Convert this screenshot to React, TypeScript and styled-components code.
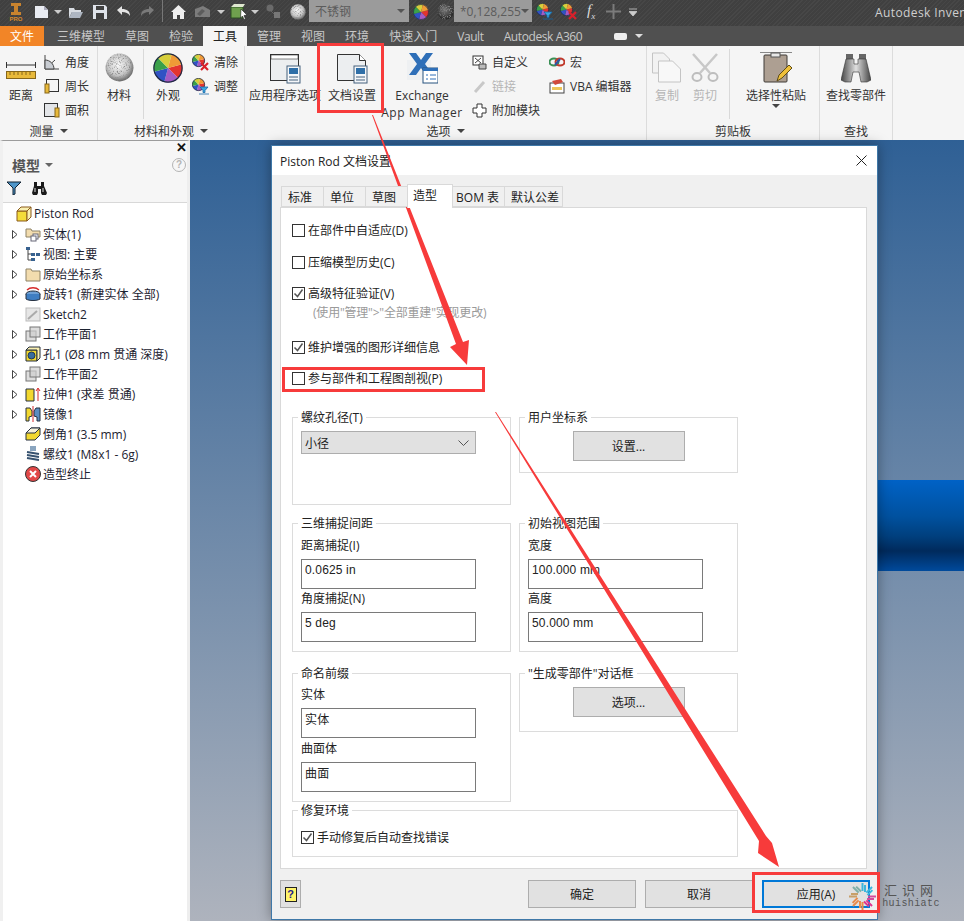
import React from 'react';
import styled, { createGlobalStyle } from 'styled-components';

const GlobalStyle = createGlobalStyle`
  html, body { margin: 0; padding: 0; background: #fff; }
  body { font-family: "Open Sans", "Noto Sans CJK SC", sans-serif; font-size: 12px; color: #111; }
`;

/* ---------- shared little drawings ---------- */

const sector = (a: number, b: number) => {
  const p = (d: number) => [50 + 48 * Math.cos((d * Math.PI) / 180), 50 + 48 * Math.sin((d * Math.PI) / 180)].map((n) => n.toFixed(1)).join(' ');
  return `M50 50L${p(a)}A48 48 0 0 1 ${p(b)}Z`;
};

const WHEEL = ['#e3342f', '#a35bc4', '#3152c4', '#3aa04a', '#d7cf3c', '#ef9a36'];

const Wheel: React.FC<{ size: number }> = ({ size }) => (
  <svg width={size} height={size} viewBox="0 0 100 100">
    {WHEEL.map((c, i) => (
      <path key={c} d={sector(i * 60 - 15, i * 60 + 45)} fill={c} />
    ))}
    <circle cx="50" cy="50" r="47" fill="none" stroke="#1f2a44" strokeWidth="4" />
  </svg>
);

const SmallWheel: React.FC<{ mark: 'x' | 'funnel' }> = ({ mark }) => (
  <svg width="17" height="17" viewBox="0 0 17 17">
    <g transform="scale(.13)">
      {WHEEL.map((c, i) => (
        <path key={c} d={sector(i * 60 - 15, i * 60 + 45)} fill={c} />
      ))}
      <circle cx="50" cy="50" r="47" fill="none" stroke="#1f2a44" strokeWidth="6" />
    </g>
    {mark === 'x' ? (
      <path d="M9 9l7 7M16 9l-7 7" stroke="#d9202a" strokeWidth="2.2" />
    ) : (
      <path d="M8 9h8l-3 3.500v2h-2v-2zM7 16h10" fill="#3aa7e0" stroke="#1668a8" strokeWidth=".8" />
    )}
  </svg>
);

const Ball: React.FC<{ id: string; size: number; dark?: boolean }> = ({ id, size, dark }) => (
  <svg width={size} height={size} viewBox="0 0 100 100">
    <defs>
      <radialGradient id={`${id}g`} cx=".45" cy=".4" r=".65">
        <stop offset="0" stopColor={dark ? '#777' : '#fafafa'} />
        <stop offset=".6" stopColor={dark ? '#444' : '#c4c4c4'} />
        <stop offset="1" stopColor={dark ? '#1c1c1c' : '#505050'} />
      </radialGradient>
      <filter id={`${id}f`}>
        <feTurbulence type="fractalNoise" baseFrequency=".22" numOctaves="2" seed="4" />
        <feColorMatrix values="0 0 0 0 .25 0 0 0 0 .25 0 0 0 0 .25 3.5 0 0 0 -1.75" />
        <feComposite in2="SourceGraphic" operator="in" />
        <feMerge>
          <feMergeNode in="SourceGraphic" />
          <feMergeNode />
        </feMerge>
      </filter>
    </defs>
    <circle cx="50" cy="50" r="48" fill={`url(#${id}g)`} filter={`url(#${id}f)`} />
  </svg>
);

const Caret = styled.span<{ $c?: string }>`
  display: inline-block;
  width: 0;
  height: 0;
  border-left: 4px solid transparent;
  border-right: 4px solid transparent;
  border-top: 4px solid ${(p) => p.$c || '#444'};
`;

const Svg: React.FC<{ w: number; h?: number; children: React.ReactNode }> = ({ w, h, children }) => (
  <svg width={w} height={h || w} viewBox={`0 0 ${w} ${h || w}`}>
    {children}
  </svg>
);

/* ---------- title bar ---------- */

const TitleBar = styled.div`
  height: 26px;
  display: flex;
  align-items: flex-start;
  position: relative;
  background: repeating-linear-gradient(135deg, #474747 0 1px, #404040 1px 3px);
  overflow: hidden;
`;

const Slot = styled.div<{ $gap: number }>`
  margin-left: ${(p) => p.$gap}px;
  height: 23px;
  display: flex;
  align-items: center;
  flex: none;
`;

const QuickSep = styled.div<{ $gap: number }>`
  margin-left: ${(p) => p.$gap}px;
  width: 1px;
  height: 22px;
  background: #777;
  flex: none;
`;

const Combo = styled.div<{ $gap: number; $w: number }>`
  margin-left: ${(p) => p.$gap}px;
  width: ${(p) => p.$w}px;
  height: 22px;
  box-sizing: border-box;
  padding: 0 4px 0 6px;
  background: #9b9b9b;
  color: #5c5c5c;
  display: flex;
  align-items: center;
  justify-content: space-between;
  flex: none;
  font-size: 12px;
  white-space: nowrap;
  overflow: hidden;
`;

const Fx = styled.span`
  font-family: "Liberation Serif", serif;
  font-style: italic;
  font-size: 15px;
  color: #ddd;
  sub { font-size: 9px; }
`;

const AppTitle = styled.div`
  position: absolute;
  left: 875px;
  top: 4px;
  color: #cfcfcf;
  font-size: 12px;
  letter-spacing: .4px;
  white-space: nowrap;
`;

const Logo = styled.div`
  width: 20px;
  display: flex;
  flex-direction: column;
  align-items: center;
  color: #d98a2c;
  font: bold 6px "Liberation Sans", sans-serif;
  line-height: 6px;
`;

const TitleIcons = () => (
  <>
    <Slot $gap={6}>
      <Logo>
        <Svg w={12} h={14}>
          <path d="M1 1h10v3H8v6h3v3H1v-3h3V4H1z" fill="#c9832e" />
        </Svg>
        PRO
      </Logo>
    </Slot>
    <Slot $gap={8}>
      <Svg w={15} h={16}>
        <path d="M1 2h9l4 4v8H1z" fill="#e9ecf2" />
        <path d="M10 2v4h4" fill="#aab" />
      </Svg>
    </Slot>
    <Slot $gap={5}><Caret $c="#ccc" /></Slot>
    <Slot $gap={6}>
      <Svg w={16}>
        <path d="M1 4h5l1 2h6v2H4l-3 6z" fill="#d8dce2" />
        <path d="M4 8h11l-3 6H1z" fill="#aeb6c2" />
      </Svg>
    </Slot>
    <Slot $gap={8}>
      <Svg w={16}>
        <path d="M1 1h12l2 2v12H1z" fill="#dfe3ea" />
        <path d="M4 2h8v4H4z" fill="#404040" />
        <path d="M4 9h8v6H4z" fill="#3f3f3f" />
      </Svg>
    </Slot>
    <Slot $gap={8}>
      <Svg w={15}>
        <path d="M1 6l5-4v3c5 0 8 2 8 7-2-3-4-4-8-4v3z" fill="#e4e4e4" />
      </Svg>
    </Slot>
    <Slot $gap={9}>
      <Svg w={15}>
        <path d="M14 6L9 2v3c-5 0-8 2-8 7 2-3 4-4 8-4v3z" fill="#7a7a7a" />
      </Svg>
    </Slot>
    <QuickSep $gap={7} />
    <Slot $gap={8}>
      <Svg w={15}>
        <path d="M7.500 1L15 8h-2v7H9v-4H6v4H2V8H0z" fill="#eee" />
      </Svg>
    </Slot>
    <Slot $gap={8}>
      <Svg w={17} h={16}>
        <path d="M1 5l8-3 7 4v7H1z" fill="#7c7c7c" />
        <path d="M3 10l5-5 3 2-5 5z" fill="#5c5c5c" />
      </Svg>
    </Slot>
    <Slot $gap={6}><Caret $c="#ccc" /></Slot>
    <Slot $gap={5}>
      <Svg w={19} h={18}>
        <path d="M1 4h12v11H1z" fill="#6fa04e" stroke="#2d4f22" />
        <path d="M1 4l3-3h11l-2 3z" fill="#dfe8d0" />
        <path d="M11 6l6 6-3 .5 1.500 3.500-1.500.5-1.500-3.500-2 2z" fill="#fff" stroke="#222" strokeWidth=".6" />
      </Svg>
    </Slot>
    <Slot $gap={2}><Caret $c="#ccc" /></Slot>
    <Slot $gap={7}>
      <Svg w={15} h={16}>
        <circle cx="4" cy="4" r="3.500" fill="#6a6a6a" />
        <path d="M8 8h6v6H8z" fill="#777" />
        <path d="M5 7l3 3" stroke="#666" />
      </Svg>
    </Slot>
    <Slot $gap={9}><Ball id="q1" size={16} /></Slot>
    <Combo $gap={3} $w={100}>
      不锈钢<Caret $c="#555" />
    </Combo>
    <Slot $gap={4}><Wheel size={16} /></Slot>
    <Slot $gap={8}><Ball id="q2" size={17} dark /></Slot>
    <Combo $gap={0} $w={78}>
      *0,128,255<Caret $c="#555" />
    </Combo>
    <Slot $gap={4}><SmallWheel mark="funnel" /></Slot>
    <Slot $gap={7}><SmallWheel mark="x" /></Slot>
    <Slot $gap={10}><Fx>f<sub>x</sub></Fx></Slot>
    <Slot $gap={11}>
      <Svg w={15}>
        <path d="M7.500 0v15M0 7.500h15" stroke="#7b7b7b" strokeWidth="2" />
      </Svg>
    </Slot>
    <Slot $gap={8}>
      <Svg w={8}>
        <path d="M0 1h8M0 3.500h8L4 8z" stroke="#ccc" fill="#ccc" strokeWidth=".8" />
      </Svg>
    </Slot>
    <AppTitle>Autodesk Inventor Professional</AppTitle>
  </>
);

/* ---------- ribbon ---------- */

const TabRow = styled.div`
  height: 20px;
  display: flex;
  align-items: stretch;
  background: #505050;
`;

const RibbonTab = styled.div<{ $active?: boolean; $file?: boolean; $latin?: boolean }>`
  flex: none;
  display: flex;
  align-items: center;
  padding: 0 10px;
  margin-right: ${(p) => (p.$file ? 3 : 0)}px;
  letter-spacing: ${(p) => (p.$latin ? -0.4 : 0)}px;
  color: ${(p) => (p.$active ? '#222' : p.$file ? '#fff' : '#c8c8c8')};
  background: ${(p) => (p.$active ? '#f5f5f5' : p.$file ? '#f28527' : 'transparent')};
`;

const TabGadget = styled.div`
  margin-left: 22px;
  display: flex;
  align-items: center;
  gap: 8px;
`;

const GadgetPill = styled.div`
  width: 13px;
  height: 7px;
  border-radius: 2px;
  background: #eee;
`;

const Ribbon = styled.div`
  height: 94px;
  display: flex;
  background: #f5f5f5;
`;

const RibbonPanel = styled.div<{ $w: number }>`
  width: ${(p) => p.$w}px;
  flex: none;
  box-sizing: border-box;
  display: flex;
  flex-direction: column;
  border-right: 1px solid #dcdcdc;
`;

const PanelBody = styled.div`
  height: 76px;
  display: flex;
  align-items: flex-start;
`;

const PanelFoot = styled.div`
  height: 18px;
  display: flex;
  align-items: center;
  justify-content: center;
  gap: 6px;
  color: #333;
`;

const LargeTool = styled.div<{ $w: number; $off?: boolean }>`
  width: ${(p) => p.$w}px;
  flex: none;
  padding-top: 5px;
  display: flex;
  flex-direction: column;
  align-items: center;
  text-align: center;
  line-height: 17px;
  white-space: nowrap;
  color: ${(p) => (p.$off ? '#b5b5b5' : '#333')};
`;

const LargeIcon = styled.div`
  height: 33px;
  margin-bottom: 3px;
  display: flex;
  align-items: center;
  justify-content: center;
`;

const WideLine = styled.span`
  letter-spacing: .6px;
`;

const SmallCol = styled.div<{ $w?: number; $gap?: number }>`
  ${(p) => (p.$w ? `width: ${p.$w}px;` : '')}
  margin-left: ${(p) => p.$gap || 0}px;
  padding-top: 4px;
  flex: none;
`;

const SmallTool = styled.div<{ $off?: boolean }>`
  height: 24px;
  display: flex;
  align-items: center;
  gap: 5px;
  white-space: nowrap;
  color: ${(p) => (p.$off ? '#b5b5b5' : '#333')};
`;

const SmallIcon = styled.div`
  width: 16px;
  display: flex;
  justify-content: center;
  flex: none;
`;

const VDivider = styled.div<{ $gap: number }>`
  width: 1px;
  height: 70px;
  margin: 3px 0 0 ${(p) => p.$gap}px;
  background: #d9d9d9;
  flex: none;
`;

const DocPanelIcon: React.FC<{ sheet?: boolean }> = ({ sheet }) => (
  <Svg w={32} h={32}>
    {sheet ? (
      <>
        <path d="M1.500 2.500h22l6 6v20h-28z" fill="#eceef0" stroke="#333" />
        <path d="M23.500 2.500v6h6" fill="#fff" stroke="#333" />
      </>
    ) : (
      <>
        <rect x="1.500" y="2.500" width="28" height="26" fill="#eceef0" stroke="#333" />
        <path d="M2 3h27v4H2z" fill="#fff" stroke="#333" strokeWidth=".6" />
      </>
    )}
    <rect x="18" y="14" width="13" height="17" fill="#f4f6f9" stroke="#44607d" />
    <rect x="20" y="16" width="9" height="6" fill="#2f6fa8" />
    <path d="M20 25h9M20 28h9" stroke="#44607d" />
  </Svg>
);

const RibbonBar = () => (
  <>
    <TabRow>
      <RibbonTab $file>文件</RibbonTab>
      {['三维模型', '草图', '检验'].map((t) => (
        <RibbonTab key={t}>{t}</RibbonTab>
      ))}
      <RibbonTab $active>工具</RibbonTab>
      {['管理', '视图', '环境', '快速入门'].map((t) => (
        <RibbonTab key={t}>{t}</RibbonTab>
      ))}
      <RibbonTab $latin>Vault</RibbonTab>
      <RibbonTab $latin>Autodesk A360</RibbonTab>
      <TabGadget>
        <GadgetPill />
        <Caret $c="#ddd" />
      </TabGadget>
    </TabRow>
    <Ribbon>
      <RibbonPanel $w={98}>
        <PanelBody>
          <LargeTool $w={42}>
            <LargeIcon>
              <Svg w={30} h={24}>
                <path d="M.500 6v6M29.500 6v6M0 9h30" stroke="#333" />
                <rect x=".5" y="15.500" width="29" height="7" fill="#e8b93a" stroke="#86661a" />
                <path d="M4 16v3M8 16v3M12 16v3M16 16v3M20 16v3M24 16v3" stroke="#86661a" />
              </Svg>
            </LargeIcon>
            距离
          </LargeTool>
          <SmallCol $gap={2}>
            <SmallTool>
              <SmallIcon>
                <Svg w={16}>
                  <path d="M1 1v14h14M1 15L11 6" fill="none" stroke="#444" />
                  <path d="M1 6c5 0 9 4 9 9H1z" fill="#c8ccd2" stroke="#444" />
                </Svg>
              </SmallIcon>
              角度
            </SmallTool>
            <SmallTool>
              <SmallIcon>
                <Svg w={16}>
                  <rect x="2.500" y="1.500" width="12" height="12" fill="none" stroke="#333" />
                  <rect x="1" y="6" width="4" height="9" fill="#e8b93a" stroke="#86661a" />
                </Svg>
              </SmallIcon>
              周长
            </SmallTool>
            <SmallTool>
              <SmallIcon>
                <Svg w={16}>
                  <rect x=".5" y="1.500" width="13" height="13" fill="#e3e5e8" stroke="#333" />
                  <rect x="11" y="6" width="4" height="9" fill="#e8b93a" stroke="#86661a" />
                </Svg>
              </SmallIcon>
              面积
            </SmallTool>
          </SmallCol>
        </PanelBody>
        <PanelFoot>测量 <Caret /></PanelFoot>
      </RibbonPanel>

      <RibbonPanel $w={147}>
        <PanelBody>
          <LargeTool $w={42}>
            <LargeIcon><Ball id="r1" size={29} /></LargeIcon>
            材料
          </LargeTool>
          <VDivider $gap={3} />
          <LargeTool $w={48}>
            <LargeIcon><Wheel size={30} /></LargeIcon>
            外观
          </LargeTool>
          <SmallCol>
            <SmallTool><SmallWheel mark="x" />清除</SmallTool>
            <SmallTool><SmallWheel mark="funnel" />调整</SmallTool>
          </SmallCol>
        </PanelBody>
        <PanelFoot>材料和外观 <Caret /></PanelFoot>
      </RibbonPanel>

      <RibbonPanel $w={402}>
        <PanelBody>
          <LargeTool $w={80}>
            <LargeIcon><DocPanelIcon /></LargeIcon>
            应用程序选项
          </LargeTool>
          <LargeTool $w={54}>
            <LargeIcon><DocPanelIcon sheet /></LargeIcon>
            文档设置
          </LargeTool>
          <LargeTool $w={86}>
            <LargeIcon>
              <Svg w={32} h={32}>
                <rect x="1" y="8" width="24" height="20" fill="#eef0f2" />
                <path d="M3 1h7l5 7 5-7h7l-8 11 8 11h-7l-5-7-5 7H3l8-11z" fill="#2e6fb8" />
                <rect x="17" y="16" width="15" height="15" fill="#fff" stroke="#27537f" />
                <path d="M17 16h15v3H17z" fill="#2e6fb8" />
                <path d="M20 23h2M24 23h6M20 27h2M24 27h6" stroke="#2e6fb8" />
              </Svg>
            </LargeIcon>
            Exchange<br /><WideLine>App Manager</WideLine>
          </LargeTool>
          <SmallCol $w={78} $gap={6}>
            <SmallTool>
              <SmallIcon>
                <Svg w={15}>
                  <rect x="1" y="1" width="10" height="9" fill="#fff" stroke="#333" />
                  <path d="M3 3l6 5M9 3L3 8M7 9h7v5H7z" fill="#bbb" stroke="#444" />
                </Svg>
              </SmallIcon>
              自定义
            </SmallTool>
            <SmallTool $off>
              <SmallIcon>
                <Svg w={15}>
                  <path d="M3 13l9-10" stroke="#c8c8c8" strokeWidth="3" />
                </Svg>
              </SmallIcon>
              链接
            </SmallTool>
            <SmallTool>
              <SmallIcon>
                <Svg w={15}>
                  <path d="M5 1h5v4h4v5h-4v4H5v-4H1V5h4z" fill="#fff" stroke="#333" />
                </Svg>
              </SmallIcon>
              附加模块
            </SmallTool>
          </SmallCol>
          <SmallCol>
            <SmallTool>
              <SmallIcon>
                <Svg w={16} h={12}>
                  <ellipse cx="5" cy="6" rx="4.500" ry="3.500" fill="none" stroke="#3a8f55" strokeWidth="2" />
                  <ellipse cx="11" cy="6" rx="4.500" ry="3.500" fill="none" stroke="#c0392b" strokeWidth="2" />
                  <path d="M6 9l5-6" stroke="#2d55a8" strokeWidth="2" />
                </Svg>
              </SmallIcon>
              宏
            </SmallTool>
            <SmallTool>
              <SmallIcon>
                <Svg w={16}>
                  <rect x="1" y="5" width="14" height="10" fill="#fff" stroke="#444" />
                  <path d="M3 3l9-2 2 3-8 3z" fill="#d14a3c" />
                  <path d="M3 9h10v3H3z" fill="#ecc65a" />
                </Svg>
              </SmallIcon>
              VBA 编辑器
            </SmallTool>
          </SmallCol>
        </PanelBody>
        <PanelFoot>选项 <Caret /></PanelFoot>
      </RibbonPanel>

      <RibbonPanel $w={173}>
        <PanelBody>
          <LargeTool $w={40} $off>
            <LargeIcon>
              <Svg w={30} h={31}>
                <path d="M.500 1h11l6 6v14H.500z" fill="#f2f2f2" stroke="#c4c4c4" />
                <path d="M6.500 9h14l8 8v13h-22z" fill="#f8f8f8" stroke="#c4c4c4" />
              </Svg>
            </LargeIcon>
            复制
          </LargeTool>
          <LargeTool $w={36} $off>
            <LargeIcon>
              <Svg w={28} h={30}>
                <path d="M2 1l17 19M26 1L9 20" stroke="#c8c8c8" strokeWidth="2.500" />
                <ellipse cx="6" cy="24" rx="4.500" ry="4" fill="none" stroke="#bdbdbd" strokeWidth="2" />
                <ellipse cx="22" cy="24" rx="4.500" ry="4" fill="none" stroke="#bdbdbd" strokeWidth="2" />
              </Svg>
            </LargeIcon>
            剪切
          </LargeTool>
          <VDivider $gap={6} />
          <LargeTool $w={92}>
            <LargeIcon>
              <Svg w={32} h={32}>
                <path d="M0 .500h32" stroke="#888" />
                <rect x="4" y="3" width="23" height="27" rx="1" fill="#ad9f92" stroke="#3e3a36" />
                <rect x="11" y="1" width="9" height="4" fill="#e8e8e8" stroke="#555" />
                <path d="M17 29l2-6 10-10 3 3-10 10z" fill="#efc03a" stroke="#5f4d18" />
              </Svg>
            </LargeIcon>
            选择性粘贴
            <Caret />
          </LargeTool>
        </PanelBody>
        <PanelFoot>剪贴板</PanelFoot>
      </RibbonPanel>

      <RibbonPanel $w={73}>
        <PanelBody>
          <LargeTool $w={72}>
            <LargeIcon>
              <Svg w={30} h={30}>
                <defs>
                  <linearGradient id="bino" x1="0" x2="1">
                    <stop offset="0" stopColor="#444" />
                    <stop offset=".5" stopColor="#e0e0e0" />
                    <stop offset="1" stopColor="#444" />
                  </linearGradient>
                </defs>
                <path d="M5 1h7v5H5zM18 1h7v5h-7z" fill="#666" />
                <path d="M5 6h8v5h4V6h8l5 21-4 2H20l-2-10h-6l-2 10H4l-4-2z" fill="url(#bino)" stroke="#333" strokeWidth=".6" />
              </Svg>
            </LargeIcon>
            查找零部件
          </LargeTool>
        </PanelBody>
        <PanelFoot>查找</PanelFoot>
      </RibbonPanel>
    </Ribbon>
  </>
);

/* ---------- browser panel ---------- */

const Workspace = styled.div`
  height: 781px;
  display: flex;
`;

const Browser = styled.aside`
  width: 190px;
  flex: none;
  box-sizing: border-box;
  background: #fff;
  border-left: 3px solid #f0f0f0;
  border-right: 3px solid #eeeeee;
  border-top: 1px solid #9c9c9c;
`;

const BrowserHead = styled.div`
  height: 62px;
  box-sizing: border-box;
  background: #f6f6f6;
  border-bottom: 1px solid #d8d8d8;
  position: relative;
`;

const BrowserTitle = styled.div`
  position: absolute;
  left: 9px;
  top: 14px;
  display: flex;
  align-items: center;
  gap: 5px;
  font-size: 14px;
  font-weight: 700;
  color: #555;
`;

const BrowserClose = styled.div`
  position: absolute;
  right: 0;
  top: -1px;
  font: 700 13px "Liberation Sans", sans-serif;
  color: #111;
`;

const HelpRound = styled.div`
  position: absolute;
  right: 1px;
  top: 17px;
  width: 12px;
  height: 12px;
  border: 1px solid #b4b4b4;
  border-radius: 50%;
  color: #b4b4b4;
  font: 700 10px/12px "Liberation Sans", sans-serif;
  text-align: center;
`;

const BrowserTools = styled.div`
  position: absolute;
  left: 4px;
  top: 40px;
  display: flex;
  gap: 10px;
`;

const TreeRow = styled.div<{ $root?: boolean }>`
  height: ${(p) => (p.$root ? 21 : 20)}px;
  box-sizing: border-box;
  display: flex;
  align-items: center;
  gap: 2px;
  padding-left: ${(p) => (p.$root ? 12 : 9)}px;
  color: #1c2230;
  white-space: nowrap;
`;

const Expander = styled.span`
  width: 10px;
  display: flex;
  flex: none;
`;

const TreeIcon = styled.span`
  width: 17px;
  display: flex;
  justify-content: center;
  flex: none;
`;

const BoxIcon = () => (
  <Svg w={16}>
    <path d="M1 5h10v10H1z" fill="#f4dc3a" stroke="#8a5a1c" />
    <path d="M1 5l4-4h10l-4 4zM11 5l4-4v10l-4 4z" fill="#f9efb0" stroke="#8a5a1c" />
  </Svg>
);

const FolderIcon = () => (
  <Svg w={16}>
    <path d="M1 3h5l1 2h8v10H1z" fill="#f2dcae" stroke="#8d8266" />
  </Svg>
);

const PlaneIcon = () => (
  <Svg w={16}>
    <rect x="1" y="5" width="10" height="10" fill="#ddd" stroke="#777" />
    <rect x="5" y="1" width="10" height="10" fill="#cfcfcf" fillOpacity=".7" stroke="#777" />
  </Svg>
);

const TREE: { icon: React.ReactNode; text: string; exp?: boolean }[] = [
  {
    icon: (
      <Svg w={16}>
        <path d="M1 3h5l1 2h8v6H1z" fill="#f2dcae" stroke="#8d8266" />
        <rect x="8" y="8" width="5" height="5" fill="#fff" stroke="#667" />
        <rect x="6" y="10" width="5" height="5" fill="#fff" stroke="#667" />
      </Svg>
    ),
    text: '实体(1)',
    exp: true,
  },
  {
    icon: (
      <Svg w={16}>
        <rect x="1" y="1" width="4" height="3" fill="#37618f" />
        <rect x="6" y="7" width="4" height="3" fill="#37618f" />
        <rect x="11" y="7" width="4" height="3" fill="#37618f" />
        <rect x="6" y="12" width="4" height="3" fill="#37618f" />
        <path d="M3 4v10h3M3 8h3" fill="none" stroke="#444" />
      </Svg>
    ),
    text: '视图: 主要',
    exp: true,
  },
  { icon: <FolderIcon />, text: '原始坐标系', exp: true },
  {
    icon: (
      <Svg w={16}>
        <path d="M2 4c3-3 9-3 12 0" fill="none" stroke="#d52a2a" strokeWidth="1.300" />
        <ellipse cx="8" cy="8" rx="7" ry="3" fill="#6d9fd4" stroke="#26303f" />
        <path d="M1 8v5c3 2 11 2 14 0V8" fill="#3f7ec2" stroke="#26303f" />
      </Svg>
    ),
    text: '旋转1 (新建实体 全部)',
    exp: true,
  },
  {
    icon: (
      <Svg w={16}>
        <rect x="1" y="2" width="14" height="13" fill="#e6e6e6" stroke="#bbb" />
        <path d="M3 13l9-8" stroke="#aaa" strokeWidth="2" />
      </Svg>
    ),
    text: 'Sketch2',
  },
  { icon: <PlaneIcon />, text: '工作平面1', exp: true },
  {
    icon: (
      <Svg w={16}>
        <path d="M1 4h11v11H1z" fill="#f2d82f" stroke="#26303f" />
        <path d="M1 4l3-3h11v11l-3 3V4z" fill="#f9efb0" stroke="#26303f" />
        <circle cx="6.500" cy="9.500" r="3.500" fill="#386d9f" stroke="#20374f" />
      </Svg>
    ),
    text: '孔1 (Ø8 mm 贯通 深度)',
    exp: true,
  },
  { icon: <PlaneIcon />, text: '工作平面2', exp: true },
  {
    icon: (
      <Svg w={16}>
        <path d="M1 3h8v12H1z" fill="#f2d82f" stroke="#26303f" />
        <path d="M13 15V3M11 5l2-3 2 3" fill="none" stroke="#d52a2a" />
      </Svg>
    ),
    text: '拉伸1 (求差 贯通)',
    exp: true,
  },
  {
    icon: (
      <Svg w={16}>
        <path d="M1 2h4l2 3v5l-3 1v4H1z" fill="#f2d82f" stroke="#26303f" />
        <path d="M15 2h-4L9 5v5l3 1v4h3z" fill="#5b8dc0" stroke="#26303f" />
        <path d="M8 0v16" stroke="#d52a2a" />
      </Svg>
    ),
    text: '镜像1',
    exp: true,
  },
  {
    icon: (
      <Svg w={16}>
        <path d="M1 7l5-5h9v7l-5 5H1z" fill="#f2d82f" stroke="#26303f" />
        <path d="M1 7l5-5h9l-5 5z" fill="#f5f0d8" stroke="#26303f" />
      </Svg>
    ),
    text: '倒角1 (3.5 mm)',
  },
  {
    icon: (
      <Svg w={16}>
        <rect x="5" y="0" width="6" height="5" fill="#8aa5bf" />
        <path d="M2 6l12 2M2 9l12 2M2 12l12 2" stroke="#35516f" strokeWidth="2" />
      </Svg>
    ),
    text: '螺纹1 (M8x1 - 6g)',
  },
  {
    icon: (
      <Svg w={16}>
        <circle cx="8" cy="8" r="7.500" fill="#e24848" stroke="#333" />
        <path d="M5 5l6 6M11 5l-6 6" stroke="#fff" strokeWidth="2" />
      </Svg>
    ),
    text: '造型终止',
  },
];

const ModelBrowser = () => (
  <Browser>
    <BrowserHead>
      <BrowserClose>✕</BrowserClose>
      <BrowserTitle>模型 <Caret $c="#666" /></BrowserTitle>
      <HelpRound>?</HelpRound>
      <BrowserTools>
        <Svg w={14}>
          <path d="M0 1h14L8 7v6l-2 1V7z" fill="#4f96c9" stroke="#123" />
        </Svg>
        <Svg w={16} h={14}>
          <path d="M3 1h3v4h4V1h3v4l3 7-1 2h-4l-1-2V8H7v4l-1 2H2l-1-2 2-7z" fill="#1a1a1a" />
          <path d="M4 7v4M12 7v4" stroke="#ddd" />
        </Svg>
      </BrowserTools>
    </BrowserHead>
    <TreeRow $root>
      <TreeIcon><BoxIcon /></TreeIcon>
      Piston Rod
    </TreeRow>
    {TREE.map((row) => (
      <TreeRow key={row.text}>
        <Expander>
          {row.exp && (
            <svg width="6" height="9" viewBox="0 0 6 9">
              <path d="M.500.500l4.500 4-4.500 4z" fill="#fff" stroke="#444" />
            </svg>
          )}
        </Expander>
        <TreeIcon>{row.icon}</TreeIcon>
        {row.text}
      </TreeRow>
    ))}
  </Browser>
);

const Viewport = styled.main`
  flex: 1;
  background: linear-gradient(#2f6095, #aeb3bd);
  position: relative;
`;

const RodBand = styled.div`
  position: absolute;
  left: 600px;
  right: 0;
  top: 340px;
  height: 91px;
  background: linear-gradient(#0062c6 0, #00519f 40%, #003f7d 62%, #002a5c 78%, #004a9c 100%);
`;

/* ---------- dialog ---------- */

const Dialog = styled.section`
  position: absolute;
  left: 271px;
  top: 145px;
  width: 607px;
  height: 775px;
  box-sizing: border-box;
  border: 1px solid #3f78a8;
  background: #f0f0f0;
  box-shadow: 0 0 12px rgba(0, 0, 0, .35);
`;

const DialogTitle = styled.header`
  height: 29px;
  background: #fff;
  display: flex;
  align-items: center;
  justify-content: space-between;
  padding: 0 10px 0 8px;
  color: #222;
`;

const CloseX = styled.div`
  display: flex;
`;

const DialogBody = styled.div`
  padding: 11px 10px 0 8px;
`;

const TabStrip = styled.div`
  display: flex;
  align-items: flex-end;
  height: 21px;
  padding-left: 2px;
  position: relative;
  z-index: 1;
`;

const DlgTab = styled.div<{ $active?: boolean; $pl?: number; $pr?: number }>`
  height: ${(p) => (p.$active ? 24 : 21)}px;
  box-sizing: border-box;
  padding: 0 ${(p) => p.$pr ?? 11}px ${(p) => (p.$active ? 3 : 0)}px ${(p) => p.$pl ?? 6}px;
  display: flex;
  align-items: center;
  background: ${(p) => (p.$active ? '#fff' : '#f0f0f0')};
  border: 1px solid #d9d9d9;
  border-bottom: ${(p) => (p.$active ? '0' : '1px solid #d9d9d9')};
  margin-left: -1px;
  margin-bottom: ${(p) => (p.$active ? -1 : 0)}px;
  flex: none;
  color: #222;
  white-space: nowrap;
`;

const TabPanel = styled.div`
  height: 662px;
  box-sizing: border-box;
  background: #fff;
  border: 1px solid #d9d9d9;
  padding: 12px 0 0 11px;
`;

const CheckRow = styled.div<{ $gap?: number }>`
  height: 20px;
  margin-top: ${(p) => p.$gap || 0}px;
  display: flex;
  align-items: center;
  gap: 3px;
  color: #222;
`;

const Box = styled.span`
  width: 13px;
  height: 13px;
  box-sizing: border-box;
  border: 1px solid #333;
  background: #fff;
  display: flex;
  flex: none;
`;

const Note = styled.div`
  height: 20px;
  line-height: 20px;
  padding-left: 21px;
  letter-spacing: -.2px;
  color: #9a9a9a;
`;

const Check: React.FC<{ on?: boolean; children: React.ReactNode; gap?: number }> = ({ on, children, gap }) => (
  <CheckRow $gap={gap}>
    <Box>
      {on && (
        <svg width="11" height="11" viewBox="0 0 11 11">
          <path d="M1.500 5.500l3 3 5-7" fill="none" stroke="#555" strokeWidth="1.500" />
        </svg>
      )}
    </Box>
    {children}
  </CheckRow>
);

const GroupRow = styled.div<{ $top: number }>`
  display: flex;
  align-items: flex-start;
  gap: 8px;
  margin-top: ${(p) => p.$top}px;
`;

const Group = styled.div<{ $h: number; $w?: number; $pt?: number }>`
  position: relative;
  width: ${(p) => p.$w || 219}px;
  height: ${(p) => p.$h}px;
  box-sizing: border-box;
  border: 1px solid #dcdcdc;
  padding: ${(p) => p.$pt ?? 13}px 0 0 8px;
  flex: none;
`;

const Legend = styled.div`
  position: absolute;
  left: 5px;
  top: -9px;
  padding: 0 3px;
  background: #fff;
  line-height: 18px;
  color: #222;
  white-space: nowrap;
`;

const FieldLabel = styled.div<{ $top?: number }>`
  height: 16px;
  line-height: 18px;
  margin-top: ${(p) => p.$top || 0}px;
  margin-bottom: 6px;
  color: #222;
`;

const TextBox = styled.input`
  display: block;
  width: 175px;
  height: 30px;
  box-sizing: border-box;
  border: 1px solid #7a7a7a;
  padding: 0 3px 9px;
  margin: 0;
  background: #fff;
  color: #222;
  font: 12px "Liberation Sans", "Noto Sans CJK SC", sans-serif;
  letter-spacing: .15px;
  outline: none;
`;

const SelectBox = styled.div`
  width: 175px;
  height: 23px;
  box-sizing: border-box;
  background: #e1e1e1;
  border: 1px solid #adadad;
  display: flex;
  align-items: center;
  justify-content: space-between;
  padding: 0 6px 0 3px;
  color: #222;
`;

const PushButton = styled.div<{ $w?: number; $h?: number; $focus?: boolean }>`
  width: ${(p) => p.$w || 112}px;
  height: ${(p) => p.$h || 30}px;
  box-sizing: border-box;
  background: #e1e1e1;
  border: ${(p) => (p.$focus ? '2px solid #0078d7' : '1px solid #adadad')};
  display: flex;
  align-items: center;
  justify-content: center;
  color: #222;
  flex: none;
`;

const CenterCell = styled.div`
  display: flex;
  justify-content: center;
  padding-right: 8px;
`;

const DialogFoot = styled.div`
  display: flex;
  align-items: center;
  height: 28px;
  margin-top: 11px;
  gap: 9px;
`;

const HelpSquare = styled.div`
  width: 21px;
  height: 28px;
  box-sizing: border-box;
  background: #e1e1e1;
  border: 1px solid #adadad;
  display: flex;
  align-items: center;
  justify-content: center;
  margin-right: 218px;
  flex: none;
`;

const HelpBubble = styled.span`
  width: 12px;
  height: 15px;
  box-sizing: border-box;
  background: #fff46a;
  border: 1px solid #222;
  color: #1c1c8c;
  font: 700 11px/13px "Liberation Sans", sans-serif;
  text-align: center;
`;

const DocumentDialog = () => (
  <Dialog>
    <DialogTitle>
      Piston Rod 文档设置
      <CloseX>
        <svg width="11" height="11" viewBox="0 0 11 11">
          <path d="M.500.500l10 10M10.500.500l-10 10" stroke="#222" />
        </svg>
      </CloseX>
    </DialogTitle>
    <DialogBody>
      <TabStrip>
        <DlgTab>标准</DlgTab>
        <DlgTab>单位</DlgTab>
        <DlgTab>草图</DlgTab>
        <DlgTab $active $pl={5} $pr={15}>造型</DlgTab>
        <DlgTab $pl={3} $pr={5}>BOM 表</DlgTab>
        <DlgTab $pr={3}>默认公差</DlgTab>
      </TabStrip>
      <TabPanel>
        <Check>在部件中自适应(D)</Check>
        <Check gap={12}>压缩模型历史(C)</Check>
        <Check gap={11} on>高级特征验证(V)</Check>
        <Note>(使用"管理"&gt;"全部重建"实现更改)</Note>
        <Check gap={14} on>维护增强的图形详细信息</Check>
        <Check gap={11}>参与部件和工程图剖视(P)</Check>

        <GroupRow $top={29}>
          <Group $h={88}>
            <Legend>螺纹孔径(T)</Legend>
            <SelectBox>
              小径
              <svg width="11" height="6" viewBox="0 0 11 6">
                <path d="M.500.500l5 5 5-5" fill="none" stroke="#555" />
              </svg>
            </SelectBox>
          </Group>
          <Group $h={56}>
            <Legend>用户坐标系</Legend>
            <CenterCell>
              <PushButton>设置...</PushButton>
            </CenterCell>
          </Group>
        </GroupRow>

        <GroupRow $top={18}>
          <Group $h={129}>
            <Legend>三维捕捉间距</Legend>
            <FieldLabel>距离捕捉(I)</FieldLabel>
            <TextBox readOnly value="0.0625 in" />
            <FieldLabel $top={1}>角度捕捉(N)</FieldLabel>
            <TextBox readOnly value="5 deg" />
          </Group>
          <Group $h={129}>
            <Legend>初始视图范围</Legend>
            <FieldLabel>宽度</FieldLabel>
            <TextBox readOnly value="100.000 mm" />
            <FieldLabel $top={1}>高度</FieldLabel>
            <TextBox readOnly value="50.000 mm" />
          </Group>
        </GroupRow>

        <GroupRow $top={21}>
          <Group $h={129} $pt={12}>
            <Legend>命名前缀</Legend>
            <FieldLabel>实体</FieldLabel>
            <TextBox readOnly value="实体" />
            <FieldLabel $top={2}>曲面体</FieldLabel>
            <TextBox readOnly value="曲面" />
          </Group>
          <Group $h={59}>
            <Legend>"生成零部件"对话框</Legend>
            <CenterCell>
              <PushButton>选项...</PushButton>
            </CenterCell>
          </Group>
        </GroupRow>

        <GroupRow $top={8}>
          <Group $h={47} $w={446} $pt={16}>
            <Legend>修复环境</Legend>
            <Check on>手动修复后自动查找错误</Check>
          </Group>
        </GroupRow>
      </TabPanel>
      <DialogFoot>
        <HelpSquare><HelpBubble>?</HelpBubble></HelpSquare>
        <PushButton $w={108} $h={28}>确定</PushButton>
        <PushButton $w={108} $h={28}>取消</PushButton>
        <PushButton $w={108} $h={28} $focus>应用(A)</PushButton>
      </DialogFoot>
    </DialogBody>
  </Dialog>
);

/* ---------- annotations drawn over the shot ---------- */

const RedFrame = styled.div<{ $x: number; $y: number; $w: number; $h: number }>`
  position: absolute;
  left: ${(p) => p.$x}px;
  top: ${(p) => p.$y}px;
  width: ${(p) => p.$w}px;
  height: ${(p) => p.$h}px;
  box-sizing: border-box;
  border: 3px solid #f73b3b;
`;

const ArrowLayer = styled.svg`
  position: absolute;
  left: 0;
  top: 0;
  pointer-events: none;
`;

const WatermarkLogo = styled.svg`
  position: absolute;
  left: 849px;
  top: 882px;
`;

const WatermarkText = styled.div`
  position: absolute;
  left: 881px;
  top: 883px;
  width: 60px;
  text-align: center;
  color: #555;
`;

const WatermarkCn = styled.div`
  font-size: 13px;
  line-height: 15px;
  letter-spacing: 5px;
`;

const WatermarkEn = styled.div`
  font: 10px/12px "Liberation Mono", monospace;
  letter-spacing: .4px;
`;

const SPOKES = ['#3cb6dd', '#3cb6dd', '#d64a9c', '#e0358f', '#e98a4a', '#e98a4a', '#c8a06a', '#7fb0a8'];

const Page = styled.div`
  position: relative;
  width: 964px;
  height: 921px;
  overflow: hidden;
`;

const App: React.FC = () => (
  <Page>
    <GlobalStyle />
    <TitleBar>
      <TitleIcons />
    </TitleBar>
    <RibbonBar />
    <Workspace>
      <ModelBrowser />
      <Viewport>
        <RodBand />
      </Viewport>
    </Workspace>
    <DocumentDialog />

    <RedFrame $x={317} $y={43} $w={67} $h={70} />
    <RedFrame $x={282} $y={367} $w={203} $h={25} />
    <RedFrame $x={752} $y={872} $w={128} $h={41} />

    <ArrowLayer width="964" height="921" viewBox="0 0 964 921">
      <path d="M372 115L456 344L450 347L467 365L469 340L463 342L373 115Z" fill="#f73b3b" />
      <path d="M495 412L759 841L758 853L779 867L772 843L766 836L496 412Z" fill="#f73b3b" />
    </ArrowLayer>

    <WatermarkLogo width="27" height="29" viewBox="0 0 27 29">
      {SPOKES.map((c, i) => (
        <path
          key={i}
          d="M13.500 9L13.500 1M16 10L16 3"
          stroke={c}
          strokeWidth="2"
          transform={`rotate(${i * 45} 13.500 14.500)`}
        />
      ))}
    </WatermarkLogo>
    <WatermarkText>
      <WatermarkCn>汇识网</WatermarkCn>
      <WatermarkEn>huishiatc</WatermarkEn>
    </WatermarkText>
  </Page>
);

export default App;
